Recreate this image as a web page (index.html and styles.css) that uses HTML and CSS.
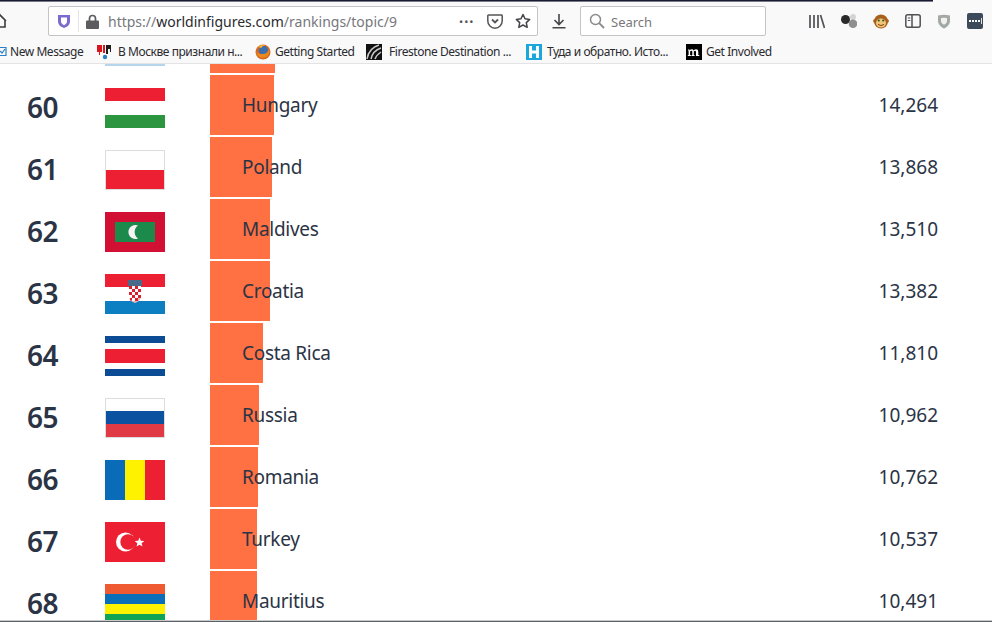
FILE: index.html
```html
<!DOCTYPE html>
<html lang="en">
  <head>
    <meta charset="UTF-8" />
    <title>World in Figures</title>
    <link rel="stylesheet" href="styles.css">
  </head>
  <body>
    <div class="page">
      <!-- Browser chrome -->
      <div class="chrome">
        <div class="topline"></div>
        <div class="toolbar">
          <svg class="home" width="7" height="16" viewBox="0 0 7 16"><path d="M-6 8L0 2l6 6M5 7v7H-5" fill="none" stroke="#3c3c40" stroke-width="1.6"/></svg>
          <div class="urlbar">
            <svg class="i-shield" width="14" height="16" viewBox="0 0 14 16"><path d="M1 2h12v6c0 4-3 6-6 7-3-1-6-3-6-7z" fill="#7b6bd0"/><path d="M4 4.500h6v4c0 2-1.500 3-3 3.700-1.500-.7-3-1.700-3-3.700z" fill="#fff"/></svg>
            <span class="sep"></span>
            <svg class="i-lock" width="13" height="15" viewBox="0 0 13 15"><path d="M3.500 7V4.500a3 3 0 0 1 6 0V7" fill="none" stroke="#5b5b60" stroke-width="1.700"/><rect y="6.500" width="13" height="8.500" rx="1" fill="#5b5b60"/></svg>
            <span class="url">https://<b>worldinfigures.com</b>/rankings/topic/9</span>
            <span class="dots">•••</span>
            <svg class="i-pocket" width="16" height="15" viewBox="0 0 16 15"><path d="M1.500 1h13c.4 0 .7.3.7.7V7a7.200 7.200 0 0 1-14.400 0V1.700c0-.4.300-.7.700-.7z" fill="none" stroke="#55555a" stroke-width="1.500"/><path d="M5 5.500l3 3 3-3" fill="none" stroke="#55555a" stroke-width="1.800"/></svg>
            <svg class="i-star" width="16" height="16" viewBox="0 0 16 16"><path d="M8 1.500l2 4.300 4.700.6-3.400 3.200.9 4.700L8 12l-4.200 2.300.9-4.700L1.300 6.400 6 5.800z" fill="none" stroke="#45454a" stroke-width="1.500" stroke-linejoin="round"/></svg>
          </div>
          <svg class="i-down" width="16" height="16" viewBox="0 0 16 16"><path d="M8 1v10M3.500 7L8 11.500 12.500 7M1.500 14.700h13" fill="none" stroke="#45454a" stroke-width="1.600"/></svg>
          <div class="searchbar">
            <svg width="16" height="16" viewBox="0 0 16 16"><circle cx="6.500" cy="6.500" r="5" fill="none" stroke="#8a8a8e" stroke-width="1.500"/><path d="M10.200 10.200L15 15" stroke="#8a8a8e" stroke-width="1.800"/></svg>
            <span>Search</span>
          </div>
          <div class="addons">
            <svg width="16" height="15" viewBox="0 0 16 15"><path d="M1 1v13M5 1v13M9 1v13M11.500 1l4 13" stroke="#505055" stroke-width="1.700" fill="none"/></svg>
            <svg width="16" height="14" viewBox="0 0 16 14"><circle cx="12" cy="3" r="3" fill="#d4d4d4"/><circle cx="12" cy="9.700" r="4.300" fill="#8f8f8f"/><circle cx="4.500" cy="5.500" r="4.500" fill="#2a2a2a"/></svg>
            <svg width="16" height="16" viewBox="0 0 16 16"><circle cx="1.800" cy="8" r="1.800" fill="#b96a1c"/><circle cx="14.200" cy="8" r="1.800" fill="#b96a1c"/><circle cx="8" cy="8.500" r="7" fill="#a9601c"/><ellipse cx="8" cy="10" rx="5" ry="4.500" fill="#f0c47a"/><circle cx="5.800" cy="7.500" r="1.100" fill="#2c5e2c"/><circle cx="10.200" cy="7.500" r="1.100" fill="#2c5e2c"/><path d="M5 11.500q3 2 6 0" stroke="#7a4412" fill="none"/></svg>
            <svg width="16" height="14" viewBox="0 0 16 14"><rect x=".8" y=".8" width="14.400" height="12.400" rx="2" fill="none" stroke="#505055" stroke-width="1.500"/><path d="M7 1v12" stroke="#505055" stroke-width="1.500"/><path d="M2.800 4h2.500M2.800 6.500h2.500" stroke="#505055"/></svg>
            <svg width="14" height="15" viewBox="0 0 14 15"><path d="M1 1.500q6-1.500 12 0V7c0 3.500-3 6-6 7.500C4 13 1 10.500 1 7z" fill="#a3aaa3"/><path d="M4 4q3-.7 6 0v3c0 1.700-1.500 3-3 3.800C5.500 10 4 8.700 4 7z" fill="#eef1ee"/></svg>
            <svg width="16" height="16" viewBox="0 0 16 16"><rect width="16" height="16" rx="2" fill="#3d4a5a"/><path d="M2 7h2v2H2zM5 7h2v2H5zM8 7h2v2H8zM11 7h2v2h-2z" fill="#fff"/><path d="M14 5h1v6h-1z" fill="#dfe4ea"/></svg>
          </div>
        </div>
        <div class="bookmarks">
          <div class="mark mark-new">
            <svg width="7" height="11" viewBox="0 0 7 11"><path d="M-2 1.500h8v8h-8z" fill="none" stroke="#2b7fc4" stroke-width="1.200"/><path d="M0 5l2 2 3-4" fill="none" stroke="#2b7fc4" stroke-width="1.200"/></svg>
            <span>New Message</span>
          </div>
          <div class="mark mark-ya">
            <svg width="16" height="16" viewBox="0 0 16 16"><path d="M1 1h5v7H4v3H3V8H1z" fill="#d8141c"/><path d="M7 1h2v8H7z" fill="#d8141c"/><path d="M10 1h5v7h-1V5h-2v5h-2z" fill="#1c1c1c"/><circle cx="9" cy="13" r="2.200" fill="#2b7fc4"/></svg>
            <span>В Москве признали н...</span>
          </div>
          <div class="mark mark-ff">
            <svg width="16" height="16" viewBox="0 0 16 16"><circle cx="8" cy="8" r="7.500" fill="#d9661c"/><circle cx="8.500" cy="6.500" r="4.700" fill="#3c6fb0"/><path d="M1 8c1 5 6 7 10 5 3-1.500 4-5 3-8-1 3-3 5-6 5-3 .2-5-.5-7-2z" fill="#e8891e"/><path d="M3 3c2-2 5-2.500 7-1.500-2 .2-3 1-3.500 2.500z" fill="#f2b02c"/></svg>
            <span>Getting Started</span>
          </div>
          <div class="mark mark-fire">
            <svg width="16" height="16" viewBox="0 0 16 16"><rect width="16" height="16" fill="#111"/><path d="M1 15C2 9 6 3 13 1M5 15C6 10 9 6 15 4M9 15c1-3 3-5 6-7" fill="none" stroke="#c8c8c8" stroke-width="1.500"/></svg>
            <span>Firestone Destination ...</span>
          </div>
          <div class="mark mark-h">
            <svg width="16" height="16" viewBox="0 0 16 16"><rect width="16" height="16" fill="#1aa8dc"/><path d="M3 2h3v12H3zM10 2h3v12h-3zM6 6.500h4v3H6z" fill="#fff"/></svg>
            <span>Туда и обратно. Исто...</span>
          </div>
          <div class="mark">
            <svg width="16" height="16" viewBox="0 0 16 16"><rect width="16" height="16" fill="#000"/><path d="M2 5.500h1.500v1q1-1.200 2.300-1.200 1.300 0 1.900 1.200 1-1.200 2.400-1.200 2.200 0 2.200 2.400V11h1v1h-3.300V8q0-1.200-.9-1.200-.8 0-1.300.8V11h.8v1H5.500v-1h.8V8q0-1.200-.9-1.200-.8 0-1.300.8V11h.8v1H1.800v-1h.8V6.500H2z" fill="#fff"/></svg>
            <span>Get Involved</span>
          </div>
        </div>
      </div>

      <!-- Ranking rows -->
      <div class="rows">
        <div class="row">
          <svg class="flag" viewBox="0 0 60 40"><rect width="60" height="40" fill="#fff"/><rect width="60" height="13" fill="#b5d5ec"/><rect y="27" width="60" height="13" fill="#b5d5ec"/></svg>
          <div class="cell"><div class="bar" style="width:65px"></div></div>
        </div>
        <div class="row">
          <span class="rank">60</span>
          <svg class="flag" viewBox="0 0 60 40"><rect width="60" height="40" fill="#fff"/><rect width="60" height="13" fill="#ed1f33"/><rect y="27" width="60" height="13" fill="#2b963f"/></svg>
          <div class="cell"><div class="bar" style="width:64px"></div><span class="name">Hungary</span><span class="value">14,264</span></div>
        </div>
        <div class="row">
          <span class="rank">61</span>
          <svg class="flag" viewBox="0 0 60 40"><rect width="60" height="40" fill="#ddd"/><rect x="1" y="1" width="58" height="19" fill="#fff"/><rect x="1" y="20" width="58" height="19" fill="#ed1f33"/></svg>
          <div class="cell"><div class="bar" style="width:62px"></div><span class="name">Poland</span><span class="value">13,868</span></div>
        </div>
        <div class="row">
          <span class="rank">62</span>
          <svg class="flag" viewBox="0 0 60 40"><rect width="60" height="40" fill="#d21034"/><rect x="10" y="10" width="40" height="20" fill="#1c8a4a"/><path d="M33 13.500A7 7 0 1 0 33 26.500A8 8 0 0 1 33 13.500z" fill="#f4f4f4"/></svg>
          <div class="cell"><div class="bar" style="width:60px"></div><span class="name">Maldives</span><span class="value">13,510</span></div>
        </div>
        <div class="row">
          <span class="rank">63</span>
          <svg class="flag" viewBox="0 0 60 40"><rect width="60" height="40" fill="#fff"/><rect width="60" height="13" fill="#ed1f33"/><rect y="27" width="60" height="13" fill="#0c7fc2"/><rect x="23" y="6" width="14" height="6" fill="#4a6a8a"/><path d="M24 12h12v10c0 4-3 6-6 7-3-1-6-3-6-7z" fill="#e8b8bc"/><path d="M24 12h3v3h-3zM30 12h3v3h-3zM27 15h3v3h-3zM33 15h3v3h-3zM24 18h3v3h-3zM30 18h3v3h-3zM27 21h3v3h-3zM33 21h3v3h-3zM25 24h2v2.500h-2zM30 24h3v3h-3z" fill="#d9202f"/><path d="M27 12h3v3h-3zM33 12h3v3h-3zM24 15h3v3h-3zM30 15h3v3h-3zM27 18h3v3h-3zM33 18h3v3h-3zM24 21h3v3h-3zM30 21h3v3h-3zM27 24h3v3h-3z" fill="#fff"/></svg>
          <div class="cell"><div class="bar" style="width:60px"></div><span class="name">Croatia</span><span class="value">13,382</span></div>
        </div>
        <div class="row">
          <span class="rank">64</span>
          <svg class="flag" viewBox="0 0 60 40"><rect width="60" height="40" fill="#fff"/><rect width="60" height="7" fill="#0b4c94"/><rect y="13" width="60" height="14" fill="#ed1f33"/><rect y="33" width="60" height="7" fill="#0b4c94"/></svg>
          <div class="cell"><div class="bar" style="width:53px"></div><span class="name">Costa Rica</span><span class="value">11,810</span></div>
        </div>
        <div class="row">
          <span class="rank">65</span>
          <svg class="flag" viewBox="0 0 60 40"><rect width="60" height="40" fill="#ddd"/><rect x="1" y="1" width="58" height="12" fill="#fff"/><rect x="1" y="13" width="58" height="13" fill="#0b52a0"/><rect x="1" y="26" width="58" height="13" fill="#e03a44"/></svg>
          <div class="cell"><div class="bar" style="width:49px"></div><span class="name">Russia</span><span class="value">10,962</span></div>
        </div>
        <div class="row">
          <span class="rank">66</span>
          <svg class="flag" viewBox="0 0 60 40"><rect width="20" height="40" fill="#0a6bb8"/><rect x="20" width="20" height="40" fill="#fff200"/><rect x="40" width="20" height="40" fill="#ed1f33"/></svg>
          <div class="cell"><div class="bar" style="width:48px"></div><span class="name">Romania</span><span class="value">10,762</span></div>
        </div>
        <div class="row">
          <span class="rank">67</span>
          <svg class="flag" viewBox="0 0 60 40"><rect width="60" height="40" fill="#ed1f33"/><circle cx="20.500" cy="20" r="9.500" fill="#fff"/><circle cx="23" cy="20" r="7.700" fill="#ed1f33"/><path d="M34.500 15.500l1.300 3.300 3.500.2-2.700 2.200.9 3.400-3-1.900-3 1.900.9-3.400-2.700-2.200 3.500-.2z" fill="#fff"/></svg>
          <div class="cell"><div class="bar" style="width:47px"></div><span class="name">Turkey</span><span class="value">10,537</span></div>
        </div>
        <div class="row">
          <span class="rank">68</span>
          <svg class="flag" viewBox="0 0 60 40"><rect width="60" height="10" fill="#f05a33"/><rect y="10" width="60" height="10" fill="#0a6fb8"/><rect y="20" width="60" height="10" fill="#fff200"/><rect y="30" width="60" height="10" fill="#12a455"/></svg>
          <div class="cell"><div class="bar" style="width:47px"></div><span class="name">Mauritius</span><span class="value">10,491</span></div>
        </div>
      </div>
      <div class="bottomline"></div>
    </div>
  </body>
</html>
```

FILE: styles.css
```css
* {
  box-sizing: border-box;
}

body {
  margin: 0;
  background-color: #fff;
  font-family: "Noto Sans", sans-serif;
}

.page {
  position: relative;
  height: 622px;
  overflow: hidden;
}

/* browser chrome */
.chrome {
  position: relative;
  z-index: 2;
  height: 64px;
  background-color: #f9f9fa;
  border-bottom: 1px solid #e3e3e5;
}

.topline {
  width: 933px;
  height: 2px;
  background-image: linear-gradient(#1b1b2f 50%, #77778a 50%);
}

.toolbar {
  display: flex;
  align-items: center;
  height: 34px;
  padding-top: 4px;
}

.home {
  flex: none;
  margin-right: 41px;
}

.urlbar {
  display: flex;
  align-items: center;
  flex: none;
  width: 490px;
  height: 30px;
  background-color: #fff;
  border: 1px solid #c4c4c6;
  border-radius: 2px;
}

.i-shield {
  margin-left: 8px;
}

.sep {
  width: 1px;
  height: 22px;
  margin: 0 7px 0 7px;
  background-color: #e4e4e6;
}

.url {
  margin-left: 9px;
  width: 351px;
  color: #77777c;
  font-size: 14px;
  white-space: nowrap;
}

.url b {
  color: #2a2a2e;
  font-weight: 400;
}

.dots {
  width: 28px;
  color: #55555a;
  font-size: 11px;
  letter-spacing: 1px;
}

.i-pocket {
  margin-right: 12px;
}

.i-down {
  flex: none;
  margin-left: 13px;
}

.searchbar {
  display: flex;
  align-items: center;
  gap: 6px;
  flex: none;
  width: 186px;
  height: 30px;
  margin-left: 13px;
  padding-left: 8px;
  background-color: #fff;
  border: 1px solid #c4c4c6;
  border-radius: 2px;
  color: #77777c;
  font-size: 13px;
  line-height: 20px;
}

.searchbar span {
  padding-top: 1px;
}

.addons {
  display: flex;
  align-items: center;
  gap: 16px;
  margin-left: 43px;
}

.bookmarks {
  display: flex;
  align-items: center;
  height: 27px;
  padding-top: 4px;
  color: #2a2a2e;
  font-size: 12px;
  letter-spacing: -0.45px;
  white-space: nowrap;
}

.mark {
  display: flex;
  align-items: center;
  gap: 4px;
}

.mark-new {
  width: 96px;
  gap: 3px;
}

.mark-ya {
  width: 159px;
  gap: 6px;
}

.mark-ff {
  width: 111px;
}

.mark-fire {
  width: 160px;
  gap: 7px;
}

.mark-h {
  width: 160px;
  gap: 5px;
}

/* ranking rows */
.rows {
  margin-top: -52px;
}

.row {
  display: flex;
  align-items: flex-start;
  height: 62px;
  padding-left: 105px;
  color: #2b3445;
}

.rank {
  flex: none;
  width: 78px;
  margin: 13px 0 0 -78px;
  font-size: 28px;
  line-height: 40px;
  font-weight: 600;
  letter-spacing: -0.5px;
}

.flag {
  flex: none;
  width: 60px;
  height: 40px;
  margin-top: 14px;
}

.cell {
  position: relative;
  display: flex;
  justify-content: space-between;
  flex: 1;
  height: 60px;
  margin: 1px 54px 0 45px;
  padding: 16px 0 0 32px;
  font-size: 19px;
  line-height: 28px;
}

.bar {
  position: absolute;
  top: 0;
  left: 0;
  height: 60px;
  background-color: #ff7043;
}

.name,
.value {
  position: relative;
}

.name {
  letter-spacing: -0.3px;
}

.bottomline {
  position: absolute;
  left: 0;
  right: 0;
  bottom: 0;
  height: 2px;
  background-image: linear-gradient(#c8cacc 50%, #5a6268 50%);
}
```
